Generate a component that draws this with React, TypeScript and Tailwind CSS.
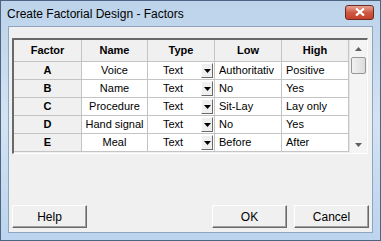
const rows = [
  { f: "A", name: "Voice", low: "Authoritativ", high: "Positive" },
  { f: "B", name: "Name", low: "No", high: "Yes" },
  { f: "C", name: "Procedure", low: "Sit-Lay", high: "Lay only" },
  { f: "D", name: "Hand signal", low: "No", high: "Yes" },
  { f: "E", name: "Meal", low: "Before", high: "After" },
];

function DropButton() {
  return (
    <div className="w-[12px] h-[15px] flex items-center justify-center bg-[#f0f0f0] border border-t-white border-l-white border-r-[#696969] border-b-[#696969]">
      <svg width="7" height="4" viewBox="0 0 7 4">
        <path d="M0 0h7L3.5 4z" fill="#000" />
      </svg>
    </div>
  );
}

function Button({ label }: { label: string }) {
  return (
    <button className="w-[75px] h-[23px] bg-[#f0f0f0] border border-t-white border-l-white border-r-[#696969] border-b-[#696969] shadow-[inset_-1px_-1px_0_#a0a0a0] text-[12px] text-black">
      {label}
    </button>
  );
}

export default function App() {
  return (
    <div
      className="w-[381px] h-[241px] flex flex-col border border-[#4d6582] bg-gradient-to-b from-[#bcd3ea] via-[#d3e3f3] to-[#bcd4ee] text-black"
      style={{ fontFamily: "'Liberation Sans', Arial, sans-serif" }}
    >
      <div className="h-[25px] flex items-center justify-between pl-[6px] pr-[6px]">
        <span className="text-[12px] text-black">Create Factorial Design - Factors</span>
        <div className="w-[29px] h-[15px] mt-[-3px] rounded-[3px] border border-[#6b2a22] bg-gradient-to-b from-[#e8a493] via-[#cf5a43] to-[#c4402a] flex items-center justify-center">
          <svg width="10" height="8" viewBox="0 0 10 8">
            <path d="M1 0.5L9 7.5M9 0.5L1 7.5" stroke="#fff" strokeWidth="2.2" />
          </svg>
        </div>
      </div>
      <div className="mx-[7px] mb-[7px] flex-1 flex flex-col bg-[#f0f0f0] border border-[#8ea4bf]">
        <div className="ml-[3px] mt-[11px] w-[356px] h-[116px] flex border-t-2 border-l-2 border-t-[#696969] border-l-[#696969] border-r border-b border-r-white border-b-white bg-[#f0f0f0]">
          <div className="w-[335px] grid grid-cols-[68px_66px_67px_67px_67px] grid-rows-[22px_18px_18px_18px_18px_18px] self-start">
            {["Factor", "Name", "Type", "Low", "High"].map((h) => (
              <div key={h} className="flex items-center justify-center font-bold text-[11px] bg-[#f0f0f0] border-r border-b border-[#c4c4c4]">
                {h}
              </div>
            ))}
            {rows.map((r) => (
              <div key={r.f} className="contents">
                <div className="flex items-center justify-center font-bold text-[11px] bg-[#f0f0f0] border-r border-b border-[#c4c4c4]">
                  {r.f}
                </div>
                <div className="flex items-center justify-center text-[11px] bg-white border-r border-b border-[#c4c4c4] whitespace-nowrap">
                  {r.name}
                </div>
                <div className="flex items-center justify-between pl-[15px] pr-[1px] text-[11px] bg-white border-r border-b border-[#c4c4c4]">
                  <span>Text</span>
                  <DropButton />
                </div>
                <div className="flex items-center pl-[4px] text-[11px] bg-white border-r border-b border-[#c4c4c4] whitespace-nowrap">
                  {r.low}
                </div>
                <div className="flex items-center pl-[4px] text-[11px] bg-white border-r border-b border-[#c4c4c4]">
                  {r.high}
                </div>
              </div>
            ))}
          </div>
          <div className="w-[17px] flex flex-col items-center bg-[#f4f4f4] border-l border-[#e6e6e6]">
            <div className="h-[17px] flex items-center justify-center">
              <svg width="7" height="4" viewBox="0 0 7 4">
                <path d="M0 4h7L3.5 0z" fill="#606060" />
              </svg>
            </div>
            <div className="w-[15px] h-[17px] rounded-[2px] border border-[#979797] bg-gradient-to-r from-[#f2f2f2] to-[#dcdcdc]" />
            <div className="flex-1" />
            <div className="h-[17px] flex items-center justify-center">
              <svg width="7" height="4" viewBox="0 0 7 4">
                <path d="M0 0h7L3.5 4z" fill="#606060" />
              </svg>
            </div>
          </div>
        </div>
        <div className="flex-1" />
        <div className="flex items-center px-[3px] mb-[4px]">
          <Button label="Help" />
          <div className="flex-1" />
          <Button label="OK" />
          <div className="w-[7px]" />
          <Button label="Cancel" />
        </div>
      </div>
    </div>
  );
}
